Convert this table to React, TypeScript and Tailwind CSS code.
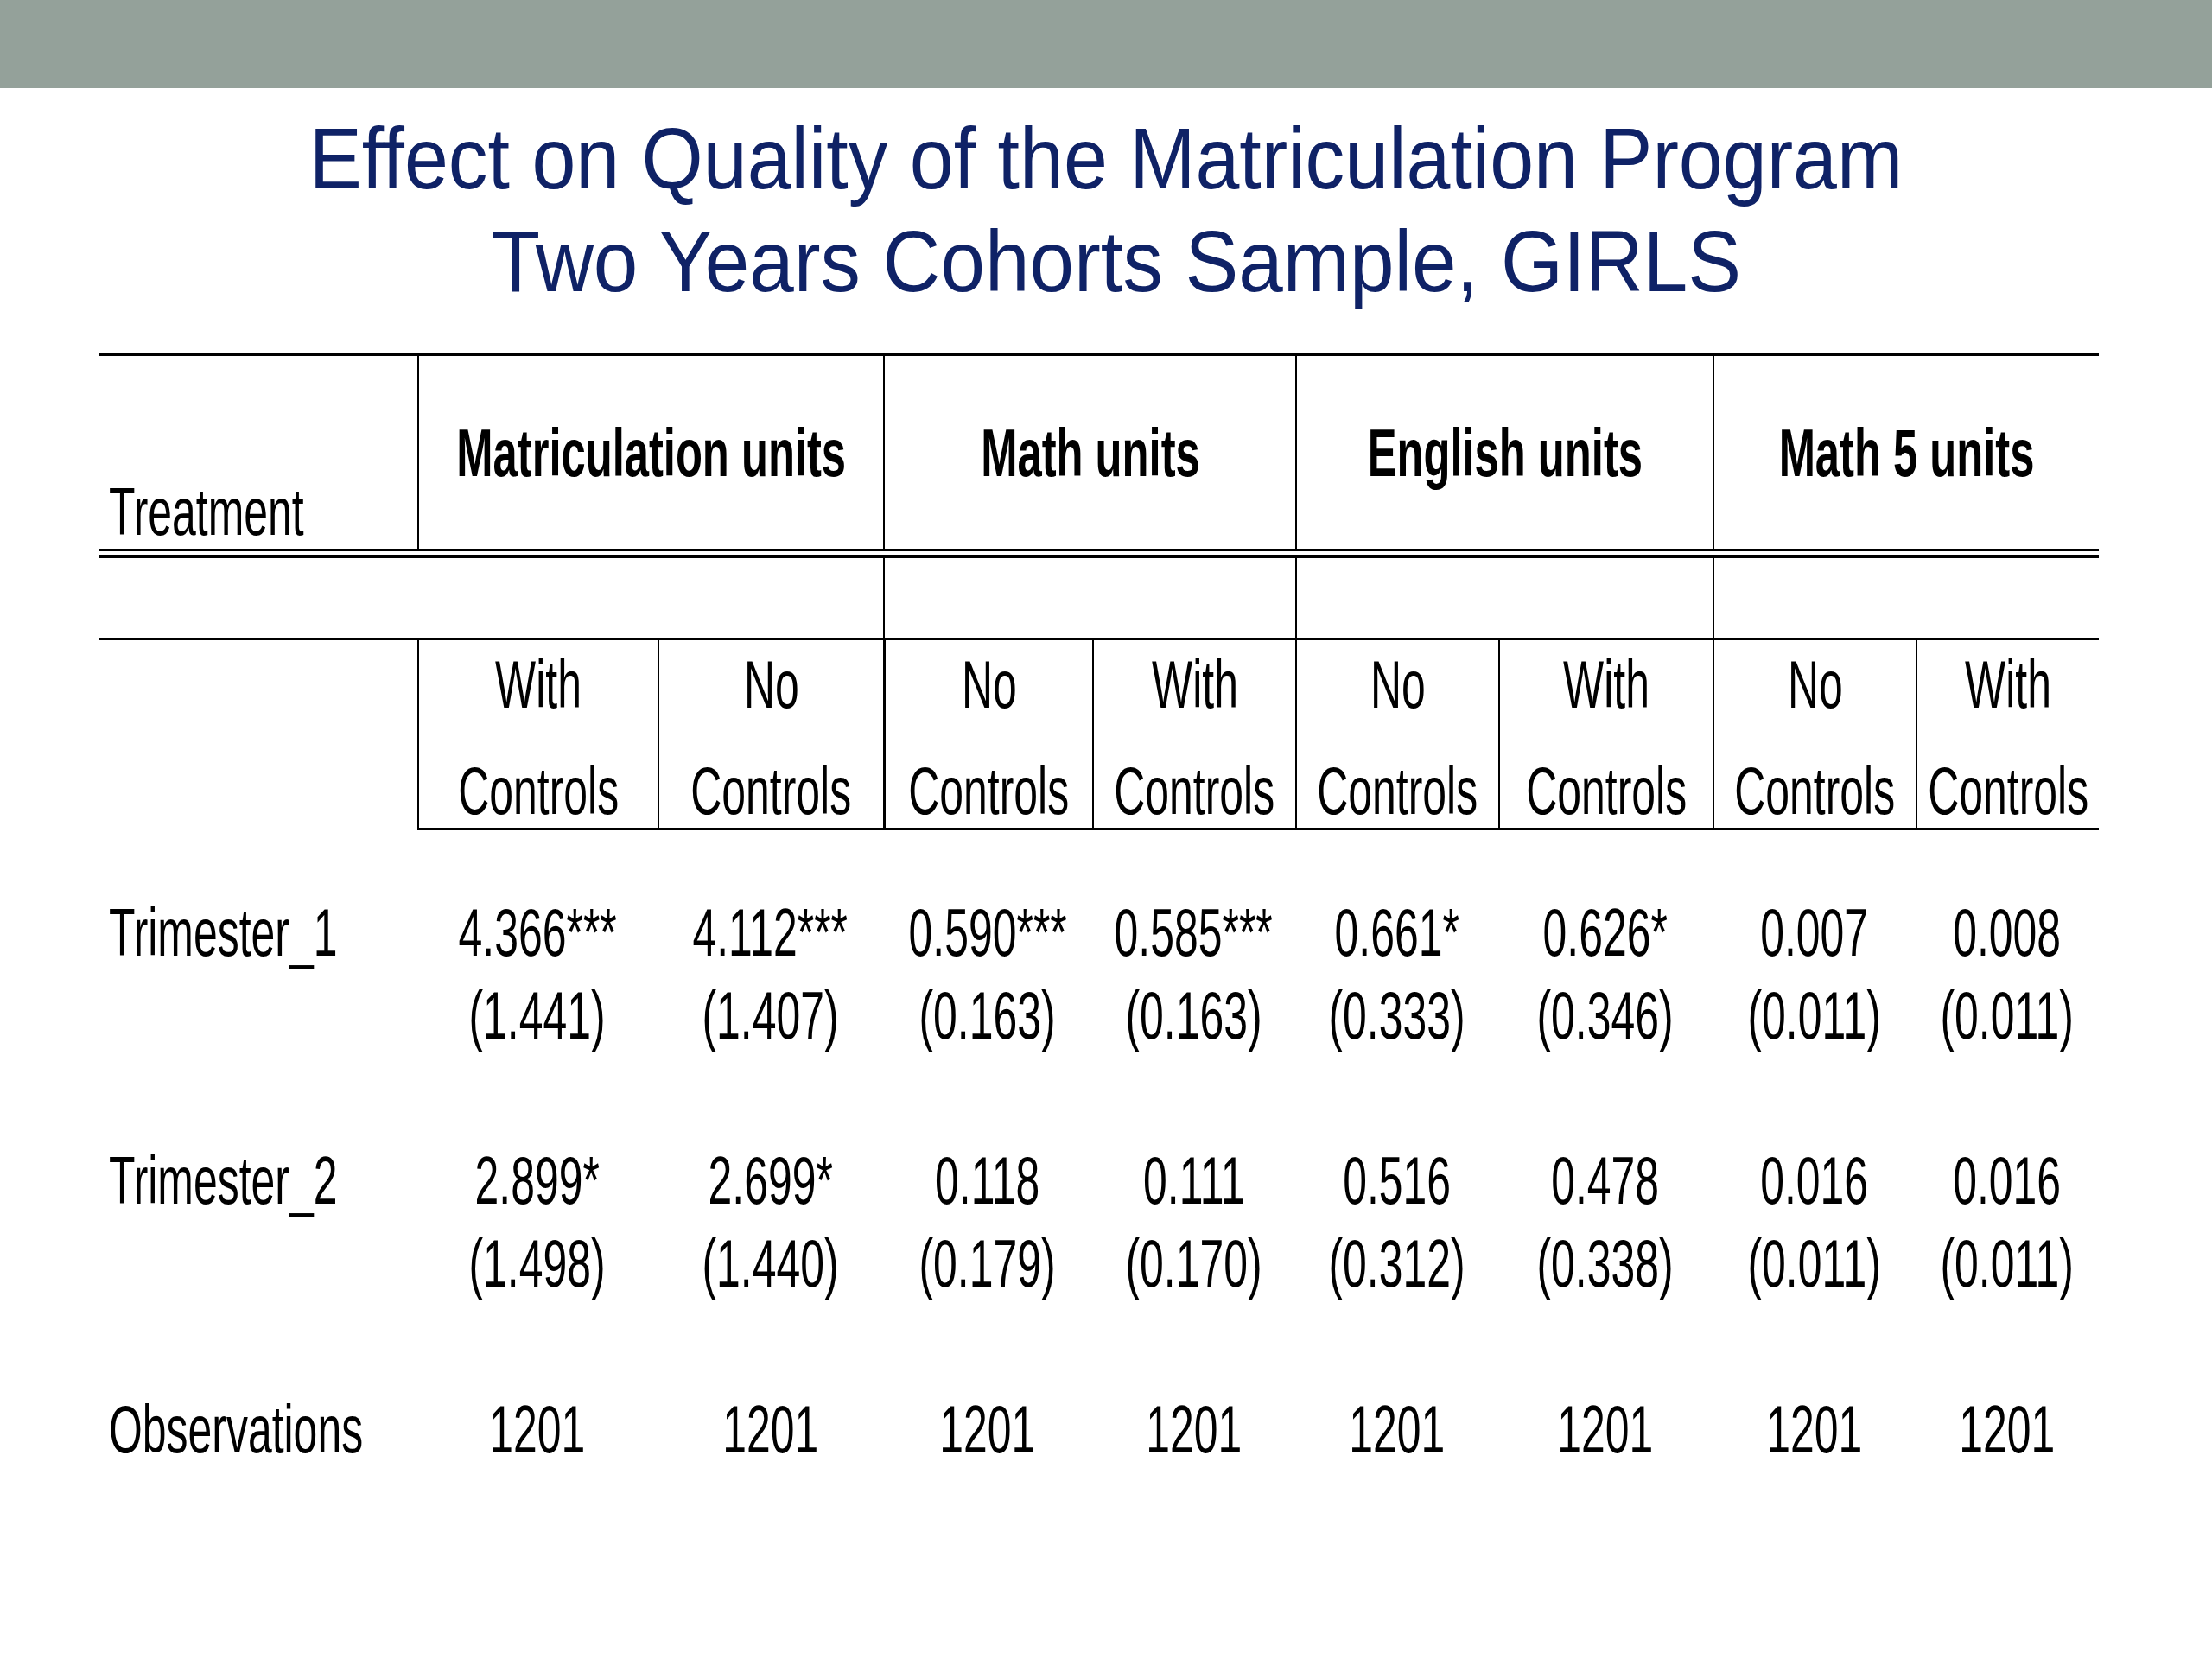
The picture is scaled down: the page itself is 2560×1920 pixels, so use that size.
import React from 'react';

const font = "font-['Liberation_Sans',Arial,Helvetica,sans-serif]";
const cols = "grid grid-cols-[369px_278px_261px_242px_235px_235px_248px_235px_212px]";

const groups = ["Matriculation units", "Math units", "English units", "Math 5 units"];

const sub = [
  ["With", "Controls"],
  ["No", "Controls"],
  ["No", "Controls"],
  ["With", "Controls"],
  ["No", "Controls"],
  ["With", "Controls"],
  ["No", "Controls"],
  ["With", "Controls"],
];

const rows = [
  {
    label: "Trimester_1",
    coef: ["4.366***", "4.112***", "0.590***", "0.585***", "0.661*", "0.626*", "0.007", "0.008"],
    se: ["(1.441)", "(1.407)", "(0.163)", "(0.163)", "(0.333)", "(0.346)", "(0.011)", "(0.011)"],
  },
  {
    label: "Trimester_2",
    coef: ["2.899*", "2.699*", "0.118", "0.111", "0.516", "0.478", "0.016", "0.016"],
    se: ["(1.498)", "(1.440)", "(0.179)", "(0.170)", "(0.312)", "(0.338)", "(0.011)", "(0.011)"],
  },
];

const obs = Array(8).fill("1201");

// condensed text, squeezed around its centre
const Narrow = ({ children, bold = false }: { children: React.ReactNode; bold?: boolean }) => (
  <span
    className={`inline-block whitespace-nowrap origin-center ${bold ? "font-bold scale-x-[0.65]" : "scale-x-[0.64]"}`}
  >
    {children}
  </span>
);

const Label = ({ children }: { children: React.ReactNode }) => (
  <span className="inline-block whitespace-nowrap origin-left scale-x-[0.64]">{children}</span>
);

const DataRow = ({ label, coef, se }: { label: string; coef: string[]; se: string[] }) => (
  <div className={`${cols} text-[78px] leading-[96px]`}>
    <div className="pl-[12px] min-w-0">
      <Label>{label}</Label>
    </div>
    {coef.map((c, i) => (
      <div key={i} className="flex flex-col items-center min-w-0">
        <div className="h-[96px] flex justify-center">
          <Narrow>{c}</Narrow>
        </div>
        <div className="h-[96px] flex justify-center">
          <Narrow>{se[i]}</Narrow>
        </div>
      </div>
    ))}
  </div>
);

export default function App() {
  return (
    <div className={`min-h-[1920px] w-[2560px] bg-white text-black ${font}`}>
      <div className="h-[102px] bg-[#94a19a]" />

      {/* title */}
      <div className="mt-[22px] text-[101px] leading-[119px] text-[#0f2266]">
        <div className="flex justify-center">
          <span className="inline-block whitespace-nowrap origin-center scale-x-[0.906]">
            Effect on Quality of the Matriculation Program
          </span>
        </div>
        <div className="flex justify-center pl-[24px]">
          <span className="inline-block whitespace-nowrap origin-center scale-x-[0.917]">
            Two Years Cohorts Sample, GIRLS
          </span>
        </div>
      </div>

      {/* table */}
      <div className="mt-[46px] ml-[114px] w-[2315px]">
        <div className="h-[4px] bg-black" />

        {/* group header */}
        <div className={`${cols} h-[223px] text-[78px] leading-[78px]`}>
          <div className="flex items-end pl-[12px] pb-[4px] min-w-0">
            <Label>Treatment</Label>
          </div>
          {groups.map((g) => (
            <div key={g} className="col-span-2 border-l-2 border-black flex items-center justify-center min-w-0">
              <Narrow bold>{g}</Narrow>
            </div>
          ))}
        </div>

        <div className="h-[3px] bg-black" />
        <div className="h-[4px]" />
        <div className="h-[4px] bg-black" />

        {/* empty row */}
        <div className={`${cols} h-[92px]`}>
          <div className="col-span-3" />
          <div className="col-span-2 border-l-2 border-black" />
          <div className="col-span-2 border-l-2 border-black" />
          <div className="col-span-2 border-l-2 border-black" />
        </div>

        <div className="h-[3px] bg-black" />

        {/* sub header */}
        <div className={`${cols} h-[220px] text-[78px] leading-[78px]`}>
          <div />
          {sub.map(([a, b], i) => (
            <div
              key={i}
              className={`border-black border-b-[3px] flex flex-col items-center pt-[12px] gap-[45px] min-w-0 ${i === 2 ? "border-l-[3px]" : "border-l-2"}`}
            >
              <div className="flex justify-center">
                <Narrow>{a}</Narrow>
              </div>
              <div className="flex justify-center">
                <Narrow>{b}</Narrow>
              </div>
            </div>
          ))}
        </div>

        {/* body */}
        <div className="pt-[70px]">
          <DataRow {...rows[0]} />
          <div className="h-[95px]" />
          <DataRow {...rows[1]} />
          <div className="h-[96px]" />
          <div className={`${cols} text-[78px] leading-[96px]`}>
            <div className="pl-[12px] min-w-0">
              <Label>Observations</Label>
            </div>
            {obs.map((o, i) => (
              <div key={i} className="flex justify-center min-w-0">
                <Narrow>{o}</Narrow>
              </div>
            ))}
          </div>
        </div>
      </div>
    </div>
  );
}
